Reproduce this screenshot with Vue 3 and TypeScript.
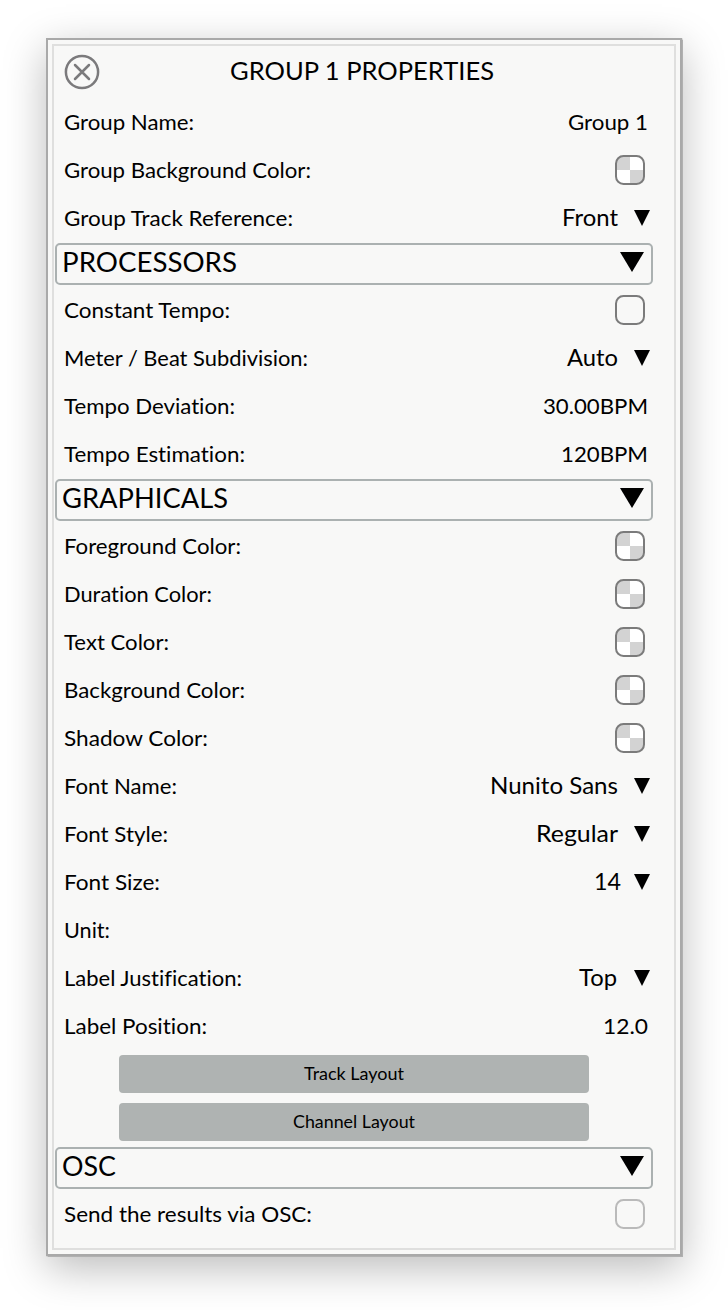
<script setup lang="ts">
type Kind = 'text' | 'select' | 'color' | 'check' | 'off' | 'section' | 'button' | 'empty'

interface Item {
  kind: Kind
  label: string
  w: number
  value?: string
  vw?: number
  end?: number
}

// w / vw: label and value widths; end: gap between value and the right edge
const items: Item[] = [
  { kind: 'text', label: 'Group Name:', w: 130, value: 'Group 1', vw: 80, end: 5 },
  { kind: 'color', label: 'Group Background Color:', w: 247 },
  { kind: 'select', label: 'Group Track Reference:', w: 229, value: 'Front', vw: 56, end: 35 },
  { kind: 'section', label: 'PROCESSORS', w: 175 },
  { kind: 'check', label: 'Constant Tempo:', w: 166 },
  { kind: 'select', label: 'Meter / Beat Subdivision:', w: 244, value: 'Auto', vw: 51, end: 35 },
  { kind: 'text', label: 'Tempo Deviation:', w: 171, value: '30.00BPM', vw: 105, end: 5 },
  { kind: 'text', label: 'Tempo Estimation:', w: 181, value: '120BPM', vw: 87, end: 5 },
  { kind: 'section', label: 'GRAPHICALS', w: 166 },
  { kind: 'color', label: 'Foreground Color:', w: 177 },
  { kind: 'color', label: 'Duration Color:', w: 148 },
  { kind: 'color', label: 'Text Color:', w: 105 },
  { kind: 'color', label: 'Background Color:', w: 181 },
  { kind: 'color', label: 'Shadow Color:', w: 144 },
  { kind: 'select', label: 'Font Name:', w: 113, value: 'Nunito Sans', vw: 128, end: 35 },
  { kind: 'select', label: 'Font Style:', w: 104, value: 'Regular', vw: 82, end: 35 },
  { kind: 'select', label: 'Font Size:', w: 96, value: '14', vw: 27, end: 32 },
  { kind: 'empty', label: 'Unit:', w: 46 },
  { kind: 'select', label: 'Label Justification:', w: 178, value: 'Top', vw: 38, end: 36 },
  { kind: 'text', label: 'Label Position:', w: 143, value: '12.0', vw: 45, end: 5 },
  { kind: 'button', label: 'Track Layout', w: 100 },
  { kind: 'button', label: 'Channel Layout', w: 122 },
  { kind: 'section', label: 'OSC', w: 54 },
  { kind: 'off', label: 'Send the results via OSC:', w: 248 },
]
</script>

<template>
  <main class="page">
    <div class="window">
      <div class="inner">
        <header class="title">
          <svg class="close" width="36" height="36" viewBox="0 0 36 36">
            <circle cx="18" cy="18" r="16.1" />
            <path d="M11 11L25 25M25 11L11 25" />
          </svg>
          <svg class="heading" width="264" height="52">
            <text x="0" y="34" textLength="264" lengthAdjust="spacingAndGlyphs">GROUP 1 PROPERTIES</text>
          </svg>
        </header>
        <template v-for="item in items" :key="item.label">
          <div v-if="item.kind === 'section'" class="section">
            <svg :width="item.w" height="38">
              <text x="0" y="27" :textLength="item.w" lengthAdjust="spacingAndGlyphs">{{ item.label }}</text>
            </svg>
            <svg class="big-arrow" width="24" height="20" viewBox="0 0 24 20"><path d="M0 0H24L12 20Z" /></svg>
          </div>
          <div v-else-if="item.kind === 'button'" class="button-row">
            <button type="button">
              <svg :width="item.w" height="38">
                <text x="0" y="25" :textLength="item.w" lengthAdjust="spacingAndGlyphs">{{ item.label }}</text>
              </svg>
            </button>
          </div>
          <div v-else class="row">
            <svg :width="item.w" height="48">
              <text x="0" y="32.3" :textLength="item.w" lengthAdjust="spacingAndGlyphs">{{ item.label }}</text>
            </svg>
            <div class="control" :class="item.kind">
              <svg v-if="item.value" :width="item.vw" height="48" :style="{ marginRight: (item.kind === 'select' ? (item.end ?? 0) - 19 : item.end) + 'px' }">
                <text x="0" y="32.3" :textLength="item.vw" lengthAdjust="spacingAndGlyphs">{{ item.value }}</text>
              </svg>
              <svg v-if="item.kind === 'select'" class="arrow" width="16" height="16" viewBox="0 0 16 16"><path d="M0 0H16L8 16Z" /></svg>
              <span v-if="item.kind === 'color'" class="box swatch"></span>
              <span v-if="item.kind === 'check' || item.kind === 'off'" class="box"></span>
            </div>
          </div>
        </template>
      </div>
    </div>
  </main>
</template>

<style>
body {
  background: #fff;
}
</style>

<style scoped>
.page {
  box-sizing: border-box;
  height: 1310px;
  padding: 38px 46px 54px;
  overflow: hidden;
  display: flex;
  font-family: Lato, "Open Sans", sans-serif;
  color: #000;
}
.window {
  box-sizing: border-box;
  flex: 1;
  padding: 4px;
  border: 2px solid #a9a9a9;
  background: #f8f8f7;
  box-shadow: 0 0 1px 0.5px #b0b0b0, 0 12px 40px rgba(0, 0, 0, 0.27);
  display: flex;
}
.inner {
  box-sizing: border-box;
  flex: 1;
  border: 2px solid #dfdfde;
}
svg {
  display: block;
  overflow: visible;
  flex: none;
}
text {
  font-size: 21.7px;
  font-variant-ligatures: none;
}
.title {
  height: 52px;
  display: flex;
  align-items: center;
  padding-left: 10px;
}
.close {
  fill: none;
  stroke: #7b7a7c;
  stroke-width: 2.5;
  stroke-linecap: round;
}
.heading {
  margin-left: 130px;
}
.heading text {
  font-size: 25px;
}
.row {
  height: 48px;
  display: flex;
  justify-content: space-between;
  align-items: center;
  padding-left: 10px;
  width: 589px;
}
.control {
  display: flex;
  align-items: center;
}
.select text {
  font-size: 22.7px;
}
.arrow {
  margin-right: 3px;
}
.box {
  box-sizing: border-box;
  width: 30px;
  height: 30px;
  margin-right: 8px;
  border: 2px solid #7b7b7b;
  border-radius: 8.5px;
}
.off .box {
  border-color: #bababa;
}
.swatch {
  background: conic-gradient(#fff 0 25%, #d3d3d3 0 50%, #fff 0 75%, #d3d3d3 0);
}
.section {
  box-sizing: border-box;
  width: 598px;
  height: 42px;
  margin: 1px;
  padding: 0 7px 0 5px;
  border: 2px solid #abb1b1;
  border-radius: 5px;
  display: flex;
  justify-content: space-between;
  align-items: center;
}
.section text {
  font-size: 26px;
}
.big-arrow {
  margin-bottom: 4px;
}
.button-row {
  height: 48px;
  display: flex;
  align-items: center;
  padding-left: 65px;
}
button {
  width: 470px;
  height: 38px;
  padding: 0;
  border: 0;
  border-radius: 4px;
  background: #afb3b2;
  color: #000;
  font-family: inherit;
  display: flex;
  justify-content: center;
  align-items: center;
}
button text {
  font-size: 17px;
}
</style>
